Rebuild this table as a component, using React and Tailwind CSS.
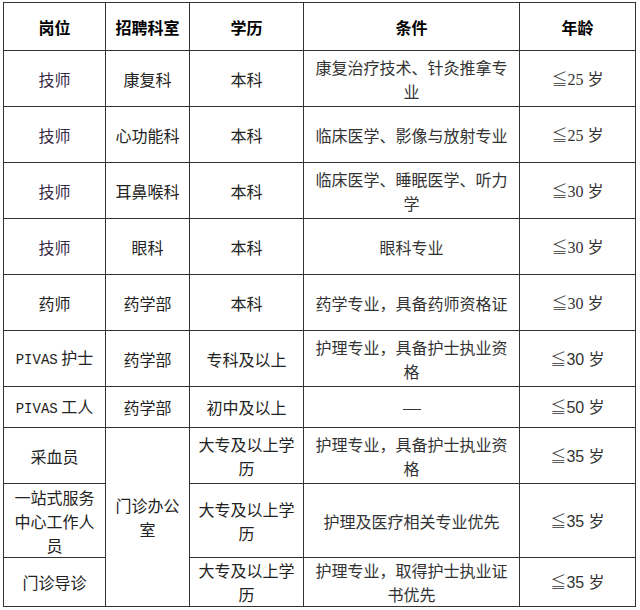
import React from "react";

const rows = [
  { pos: "技师", dept: "康复科", edu: "本科", cond: "康复治疗技术、针灸推拿专业", age: "25 岁", h: "h-[56px]", serif: true },
  { pos: "技师", dept: "心功能科", edu: "本科", cond: "临床医学、影像与放射专业", age: "25 岁", h: "h-[56px]", serif: true },
  { pos: "技师", dept: "耳鼻喉科", edu: "本科", cond: "临床医学、睡眠医学、听力学", age: "30 岁", h: "h-[56px]", serif: true },
  { pos: "技师", dept: "眼科", edu: "本科", cond: "眼科专业", age: "30 岁", h: "h-[56px]", serif: true },
  { pos: "药师", dept: "药学部", edu: "本科", cond: "药学专业，具备药师资格证", age: "30 岁", h: "h-[56px]", serif: true },
  { pos: "PIVAS 护士", dept: "药学部", edu: "专科及以上", cond: "护理专业，具备护士执业资格", age: "30 岁", h: "h-[56px]" },
  { pos: "PIVAS 工人", dept: "药学部", edu: "初中及以上", cond: "—", age: "50 岁", h: "h-[41px]" },
];

const office = [
  { pos: "采血员", edu: "大专及以上学历", cond: "护理专业，具备护士执业资格", age: "35 岁", h: "h-[56px]" },
  { pos: "一站式服务中心工作人员", edu: "大专及以上学历", cond: "护理及医疗相关专业优先", age: "35 岁", h: "h-[74px]" },
  { pos: "门诊导诊", edu: "大专及以上学历", cond: "护理专业，取得护士执业证书优先", age: "35 岁", h: "h-[49px]" },
];

const cell = "border border-[#333] px-[6px] text-center align-middle leading-6";

function PosText({ text }) {
  if (text.startsWith("PIVAS")) {
    return (
      <span>
        <span className="font-['Liberation_Mono'] text-[14px]">PIVAS</span>
        {text.slice(5)}
      </span>
    );
  }
  return text;
}

function Age({ text, serif }) {
  return (
    <span className={serif ? "font-['Liberation_Serif','Noto_Sans_CJK_SC',serif]" : "font-['Liberation_Sans','Noto_Sans_CJK_SC',sans-serif]"}>
      <span className="font-['Noto_Sans_CJK_SC',sans-serif] font-light">≦</span>
      {text}
    </span>
  );
}

export default function App() {
  return (
    <div className="bg-white w-[640px] h-[610px] pt-[2px] pl-[3px]">
      <table className="table-fixed border-collapse w-[632px] text-[16px] text-[#222] font-['Noto_Sans_CJK_SC',sans-serif]">
        <colgroup>
          <col className="w-[102px]" />
          <col className="w-[84px]" />
          <col className="w-[114px]" />
          <col className="w-[216px]" />
          <col className="w-[116px]" />
        </colgroup>
        <thead>
          <tr className="h-[48px]">
            {["岗位", "招聘科室", "学历", "条件", "年龄"].map((t) => (
              <th key={t} className={`${cell} font-bold text-black`}>
                {t}
              </th>
            ))}
          </tr>
        </thead>
        <tbody>
          {rows.map((r, i) => (
            <tr key={i} className={r.h}>
              <td className={`${cell} ${i < 4 ? "text-[#3a2a4a]" : ""}`}>
                <PosText text={r.pos} />
              </td>
              <td className={cell}>{r.dept}</td>
              <td className={cell}>{r.edu}</td>
              <td className={`${cell} text-[#333]`}>
                {r.cond === "—" ? <span className="inline-block w-[18px] h-[1px] bg-[#333] align-middle" /> : r.cond}
              </td>
              <td className={`${cell} text-[#333]`}>
                <Age text={r.age} serif={r.serif} />
              </td>
            </tr>
          ))}
          {office.map((r, i) => (
            <tr key={`o${i}`} className={r.h}>
              <td className={cell}>{r.pos}</td>
              {i === 0 && (
                <td rowSpan={3} className={cell}>
                  门诊办公室
                </td>
              )}
              <td className={cell}>{r.edu}</td>
              <td className={`${cell} text-[#333]`}>{r.cond}</td>
              <td className={`${cell} text-[#333]`}>
                <Age text={r.age} />
              </td>
            </tr>
          ))}
        </tbody>
      </table>
    </div>
  );
}
